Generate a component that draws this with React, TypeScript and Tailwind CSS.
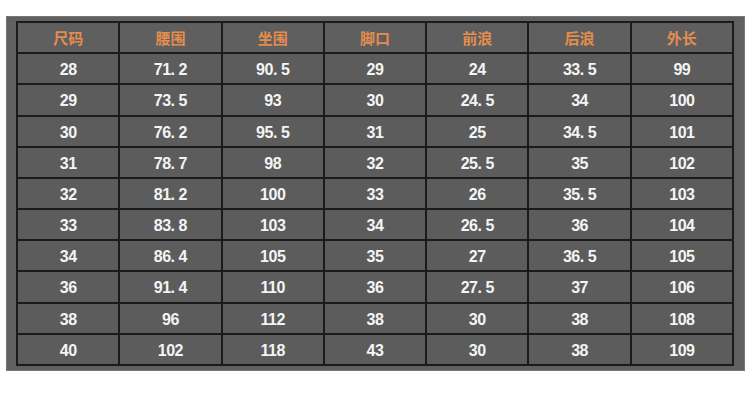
const headers = ['尺码', '腰围', '坐围', '脚口', '前浪', '后浪', '外长'];

const rows = [
  ['28', '71.2', '90.5', '29', '24', '33.5', '99'],
  ['29', '73.5', '93', '30', '24.5', '34', '100'],
  ['30', '76.2', '95.5', '31', '25', '34.5', '101'],
  ['31', '78.7', '98', '32', '25.5', '35', '102'],
  ['32', '81.2', '100', '33', '26', '35.5', '103'],
  ['33', '83.8', '103', '34', '26.5', '36', '104'],
  ['34', '86.4', '105', '35', '27', '36.5', '105'],
  ['36', '91.4', '110', '36', '27.5', '37', '106'],
  ['38', '96', '112', '38', '30', '38', '108'],
  ['40', '102', '118', '43', '30', '38', '109'],
];

// the source uses a font where the dot takes a full digit cell
function Num({ v }: { v: string }) {
  const [a, b] = v.split('.');
  return (
    <span>
      {a}
      {b !== undefined && (
        <>
          <span className="inline-block w-[8px] text-left">.</span>
          {b}
        </>
      )}
    </span>
  );
}

export default function App() {
  return (
    <div className="w-[750px] h-[404px] bg-white pt-4 pl-[6px]">
      <div className="w-[739px] h-[355px] bg-[#606060] border border-[#767676] pl-[9px] pt-[4px]">
        <table className="w-[718px] h-[345px] table-fixed border-collapse border-2 border-[#1b1b1b]">
          <tbody>
            <tr className="h-[31px]">
              {headers.map((h) => (
                <td
                  key={h}
                  className="border-2 border-[#1b1b1b] bg-[#5f5f5f] pt-[1px] text-center text-[15px] font-bold text-[#e48d4d] font-['Noto_Sans_CJK_SC',sans-serif]"
                >
                  {h}
                </td>
              ))}
            </tr>
            {rows.map((r, i) => (
              <tr key={i} className="h-[31px]">
                {r.map((v, j) => (
                  <td
                    key={j}
                    className="border-2 border-[#1b1b1b] bg-[#5c5c5c] pt-[3px] text-center text-[16px] tracking-[-0.5px] font-bold text-[#f4f4f4] font-['Liberation_Sans',sans-serif]"
                  >
                    <Num v={v} />
                  </td>
                ))}
              </tr>
            ))}
          </tbody>
        </table>
      </div>
    </div>
  );
}
